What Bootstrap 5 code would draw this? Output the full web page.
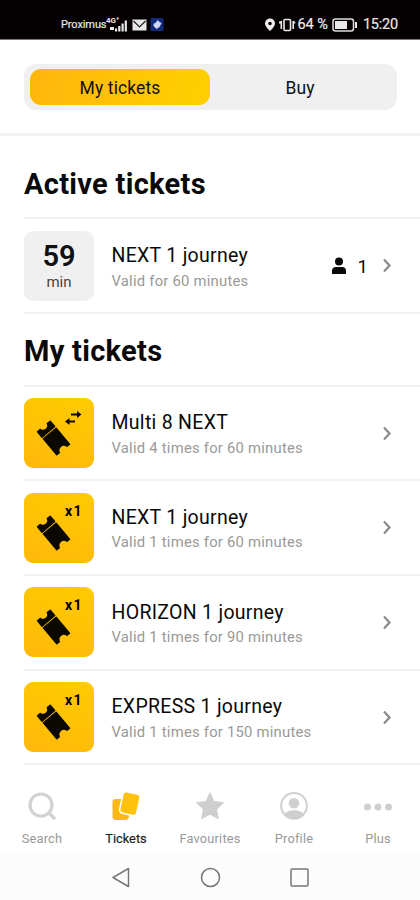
<!DOCTYPE html>
<html lang="en">
<head>
<meta charset="utf-8">
<meta name="viewport" content="width=device-width, initial-scale=1">
<title>My tickets</title>
<link href="https://cdn.jsdelivr.net/npm/bootstrap@5.3.0/dist/css/bootstrap.min.css" rel="stylesheet">
<style>
body{font-family:Roboto,"Liberation Sans",sans-serif;color:#0a0a0a;background:#fff;width:420px;height:900px;overflow:hidden}
svg{display:block;flex:none}
.status{height:40px;background:#050001;color:#e8e8e8;padding:11px 22px 0 61px;border-bottom:1px solid #777}
.carrier{font-size:11px;line-height:28px;letter-spacing:-.1px;-webkit-text-stroke:.2px #e8e8e8}
.status .clock{font-size:14.5px;line-height:30px;font-weight:400;-webkit-text-stroke:.2px #e8e8e8}
.status .clock.time-now{margin-left:5px;letter-spacing:-.2px}
.switch-area{height:96px;padding:24px 23px 0 24px;border-bottom:3px solid #f2f2f2}
.switcher{height:46px;border-radius:12px;background:#f0f0f0;padding:5px 6px}
.switcher .btn{width:180px;border:0;border-radius:11px;font-size:17.5px;line-height:38px;height:36px;padding:0;color:#111;letter-spacing:.1px}
.switcher .btn.on{background:linear-gradient(100deg,#ffb60c,#ffd000)}
.section-title{font-size:29px;font-weight:700;line-height:34px;margin:0;padding-left:24px;letter-spacing:.3px}
.t-active{height:81px;padding-top:31px}
.t-mine{height:71px;padding-top:20px}
.ticket{height:94.7px;margin-left:24px;padding:0 28px 0 0;border-top:2px solid #f2f2f2;background:#fff}
.first-row{padding-top:1px}
.last-line{height:17px;margin-left:24px;border-top:2px solid #f2f2f2}
.tile{width:70px;height:70px;border-radius:9px;flex:none}
.tile.time{background:#f0f0f0}
.tile.gold{background:linear-gradient(20deg,#ffb80a,#ffcb00)}
.num{font-size:29px;line-height:29px;font-weight:600;color:#111}
.unit{font-size:15px;line-height:15px;color:#444}
.label{margin-left:17.5px;padding-top:2px}
.name{font-size:19.5px;line-height:24px;letter-spacing:.29px}
.valid{font-size:14.8px;line-height:18px;color:#999;margin-top:3.5px;letter-spacing:.24px}
.count{font-size:18.5px;line-height:24px;margin:3px 14px 0 11px}
.tabs{height:73px;color:#999;font-size:12.8px;padding-top:10px}
.tab{width:84px;gap:11px;line-height:16px;letter-spacing:.2px}
.tab.on{color:#222}
.tab.on span{-webkit-text-stroke:.2px #222;letter-spacing:0}
.sysbar{height:47px;background:#fcfcfc;padding-left:110px;gap:67px}
</style>
<script src="https://cdn.jsdelivr.net/npm/bootstrap@5.3.0/dist/js/bootstrap.bundle.min.js"></script>
</head>
<body>
<svg width="0" height="0" class="position-absolute" aria-hidden="true">
<defs>
<g id="stub"><path transform="translate(29.500 40) rotate(-40)" d="M-8.300 -15H-4.500Q-4 -11.500 0 -11.500T4.500 -15H8.300V-8H-8.300ZM-8.300 -5.800H8.300V15H5Q4 11 0 11T-5 15H-8.300Z" fill="#0b0800" stroke="#0b0800" stroke-width="1.400" stroke-linejoin="round"/></g>
<path id="chev" d="M2 2.500l5.500 6-5.500 6" fill="none" stroke="#8c8c8c" stroke-width="2.300"/>
</defs>
</svg>
<header class="status d-flex justify-content-between">
<div class="d-flex align-items-center">
<span class="carrier">Proximus</span>
<svg width="61" height="18" viewBox="0 0 61 18"><g fill="#e8e8e8"><text x="0" y="6.500" font-size="8" font-weight="700">4G⁺</text><path d="M4 11h4v3H4zM9 12.500h2.200v3H9zM12.200 10h2.200v5.500h-2.200zM15.500 7.500h2.200v8h-2.200zM18.700 4.500h2.200v11h-2.200z"/><path d="M26.500 3.500h14v11h-14z"/></g><path d="M27.500 5l6 6 6-6" fill="none" stroke="#222" stroke-width="1.200"/><path d="M44.500 2h13v13h-13z" fill="#13297c"/><path d="M47.500 8l3-2 1-2 2 2 2 1-2 4-3 2-3-3z" fill="#cfd6f5"/></svg>
</div>
<div class="d-flex align-items-center">
<svg width="33" height="16" viewBox="0 0 33 16"><path fill="#eee" fill-rule="evenodd" d="M6 1.500a5 5 0 0 1 5 5c0 3-5 7.500-5 7.500S1 9.500 1 6.500a5 5 0 0 1 5-5zm0 3.200a1.800 1.800 0 1 0 0 3.600 1.800 1.800 0 0 0 0-3.600z"/><g fill="none" stroke="#e8e8e8" stroke-width="1.600"><rect x="20" y="2.500" width="6.500" height="11" rx="1"/><path d="M17.300 4v8M29.200 4v8M15.800 4.500v2M30.500 4.500v2"/></g></svg>
<span class="clock">64 %</span>
<svg class="ms-1" width="26" height="14" viewBox="0 0 26 14"><rect x="1" y="1" width="20.500" height="12" rx="2.500" fill="none" stroke="#ddd" stroke-width="1.500"/><path d="M3 3H15v8H3zM23 4h2v6h-2z" fill="#e8e8e8"/></svg>
<span class="clock time-now">15:20</span>
</div>
</header>
<main>
<div class="switch-area"><div class="switcher d-flex"><button class="btn on">My tickets</button><button class="btn">Buy</button></div></div>
<h1 class="section-title t-active">Active tickets</h1>
<section class="ticket first-row d-flex align-items-center">
<div class="tile time d-flex flex-column align-items-center justify-content-center gap-1"><span class="num">59</span><span class="unit">min</span></div>
<div class="flex-grow-1 label"><div class="name">NEXT 1 journey</div><div class="valid">Valid for 60 minutes</div></div>
<svg width="16" height="18" viewBox="0 0 16 18"><circle cx="8" cy="4.500" r="4" fill="#0a0a0a"/><path d="M1 17v-3q0-4 4-4h6q4 0 4 4v3z" fill="#0a0a0a"/></svg>
<span class="count">1</span>
<svg width="10" height="17"><use href="#chev"/></svg>
</section>
<div class="ticket h-auto"></div>
<h2 class="section-title t-mine">My tickets</h2>
<section class="ticket d-flex align-items-center">
<div class="tile gold"><svg width="70" height="70"><use href="#stub"/><path d="M47 16.500h8M44.500 23.500h6.500" stroke="#0b0800" stroke-width="1.800"/><path d="M53 13l4.500 3.500-4.500 3.500zM45.500 20l-4.500 3.500 4.500 3.500z" fill="#0b0800"/></svg></div>
<div class="label flex-grow-1"><div class="name">Multi 8 NEXT</div><div class="valid">Valid 4 times for 60 minutes</div></div>
<svg width="10" height="17"><use href="#chev"/></svg>
</section>
<section class="ticket d-flex align-items-center">
<div class="tile gold"><svg width="70" height="70"><use href="#stub"/><text x="41" y="23" font-size="14" font-weight="700" letter-spacing="1.300">x1</text></svg></div>
<div class="label flex-grow-1"><div class="name">NEXT 1 journey</div><div class="valid">Valid 1 times for 60 minutes</div></div>
<svg width="10" height="17"><use href="#chev"/></svg>
</section>
<section class="ticket d-flex align-items-center">
<div class="tile gold"><svg width="70" height="70"><use href="#stub"/><text x="41" y="23" font-size="14" font-weight="700" letter-spacing="1.300">x1</text></svg></div>
<div class="label flex-grow-1"><div class="name">HORIZON 1 journey</div><div class="valid">Valid 1 times for 90 minutes</div></div>
<svg width="10" height="17"><use href="#chev"/></svg>
</section>
<section class="ticket d-flex align-items-center">
<div class="tile gold"><svg width="70" height="70"><use href="#stub"/><text x="41" y="23" font-size="14" font-weight="700" letter-spacing="1.300">x1</text></svg></div>
<div class="label flex-grow-1"><div class="name">EXPRESS 1 journey</div><div class="valid">Valid 1 times for 150 minutes</div></div>
<svg width="10" height="17"><use href="#chev"/></svg>
</section>
<div class="last-line"></div>
</main>
<nav class="tabs d-flex">
<div class="tab d-flex flex-column align-items-center"><svg width="30" height="30" viewBox="0 0 30 30"><circle cx="14" cy="15" r="11" fill="none" stroke="#d2d2d2" stroke-width="3.200"/><path d="M22 23l6 6" stroke="#d2d2d2" stroke-width="3.500"/></svg><span>Search</span></div>
<div class="tab on d-flex flex-column align-items-center"><svg width="30" height="30" viewBox="0 0 30 30"><path d="M4.500 9h7.500v15h6v3q-1 3-3 3H4.500q-3 0-3-3V12q0-3 3-3z" fill="#fdb913"/><rect x="10" y="2.500" width="17.500" height="22" rx="3.500" transform="rotate(12 18.500 14)" fill="#ffc20a" stroke="#fff" stroke-width="1.600"/></svg><span>Tickets</span></div>
<div class="tab d-flex flex-column align-items-center"><svg width="30" height="30" viewBox="0 0 30 30"><path transform="translate(0 .8)" d="M15 2l4.100 8.700 9.400 1.200-6.900 6.600 1.700 9.500-8.300-4.600L6.700 28l1.700-9.500-6.900-6.600 9.400-1.200z" fill="#cfcfcf" stroke="#cfcfcf" stroke-linejoin="round"/></svg><span>Favourites</span></div>
<div class="tab d-flex flex-column align-items-center"><svg width="30" height="30" viewBox="0 0 30 30"><g transform="translate(0 .8)"><circle cx="15" cy="15" r="12.900" fill="none" stroke="#cfcfcf" stroke-width="2"/><circle cx="15" cy="12.500" r="5.300" fill="#cfcfcf"/><path d="M5.500 23q3-3.500 9.500-3.500t9.500 3.500q-4 5-9.500 5t-9.500-5z" fill="#cfcfcf"/></g></svg><span>Profile</span></div>
<div class="tab d-flex flex-column align-items-center"><svg width="30" height="30" viewBox="0 0 30 30"><g fill="#cfcfcf"><circle cx="4.500" cy="17" r="3.500"/><circle cx="15" cy="17" r="3.500"/><circle cx="25.500" cy="17" r="3.500"/></g></svg><span>Plus</span></div>
</nav>
<footer class="sysbar d-flex align-items-center">
<svg width="22" height="22"><path d="M18.500 2.500v18L3 11.500z" fill="none" stroke="#777" stroke-width="1.500" stroke-linejoin="round"/></svg>
<svg width="22" height="22"><circle cx="11.500" cy="11.500" r="9" fill="none" stroke="#777" stroke-width="1.500"/></svg>
<svg width="22" height="22"><rect x="3" y="3" width="17" height="17" rx="1" fill="none" stroke="#777" stroke-width="1.500"/></svg>
</footer>
</body>
</html>
